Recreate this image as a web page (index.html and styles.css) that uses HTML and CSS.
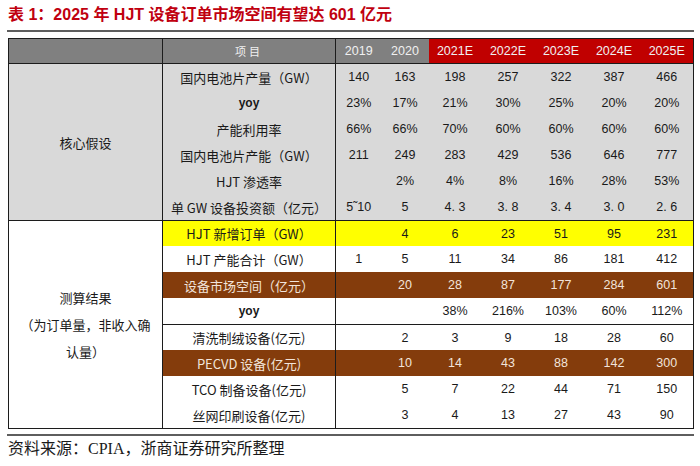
FILE: index.html
```html
<!DOCTYPE html>
<html lang="zh-CN">
<head>
<meta charset="utf-8">
<title>表 1</title>
<link rel="stylesheet" href="styles.css">
</head>
<body>
<div class="page">
  <h1 class="title">表 1：2025 年 HJT 设备订单市场空间有望达 601 亿元</h1>
  <div class="rule"></div>
  <table class="tbl">
    <colgroup>
      <col class="w-c1"><col class="w-c2"><col class="w-y19"><col class="w-y20">
      <col class="w-e"><col class="w-e"><col class="w-e"><col class="w-e"><col class="w-e">
    </colgroup>
    <thead>
      <tr class="head">
        <th class="hg c1"></th>
        <th class="hg c2 item">项目</th>
        <th class="hg">2019</th>
        <th class="hg">2020</th>
        <th class="hr">2021E</th>
        <th class="hr">2022E</th>
        <th class="hr">2023E</th>
        <th class="hr">2024E</th>
        <th class="hr">2025E</th>
      </tr>
    </thead>
    <tbody class="sec1">
      <tr>
        <td class="c1 grp" rowspan="6">核心假设</td>
        <td class="c2 lbl">国内电池片产量（GW）</td>
        <td>140</td><td>163</td><td>198</td><td>257</td><td>322</td><td>387</td><td>466</td>
      </tr>
      <tr>
        <td class="c2 lbl yoy">yoy</td>
        <td>23%</td><td>17%</td><td>21%</td><td>30%</td><td>25%</td><td>20%</td><td>20%</td>
      </tr>
      <tr>
        <td class="c2 lbl">产能利用率</td>
        <td>66%</td><td>66%</td><td>70%</td><td>60%</td><td>60%</td><td>60%</td><td>60%</td>
      </tr>
      <tr>
        <td class="c2 lbl">国内电池片产能（GW）</td>
        <td>211</td><td>249</td><td>283</td><td>429</td><td>536</td><td>646</td><td>777</td>
      </tr>
      <tr>
        <td class="c2 lbl">HJT 渗透率</td>
        <td></td><td>2%</td><td>4%</td><td>8%</td><td>16%</td><td>28%</td><td>53%</td>
      </tr>
      <tr>
        <td class="c2 lbl">单 GW 设备投资额（亿元）</td>
        <td>5˜10</td><td>5</td><td>4. 3</td><td>3. 8</td><td>3. 4</td><td>3. 0</td><td>2. 6</td>
      </tr>
    </tbody>
    <tbody class="sec2">
      <tr class="yellow first">
        <td class="c1 grp grp2" rowspan="8">测算结果<br>（为订单量，非收入确<br>认量）</td>
        <td class="c2 lbl">HJT 新增订单（GW）</td>
        <td></td><td>4</td><td>6</td><td>23</td><td>51</td><td>95</td><td>231</td>
      </tr>
      <tr>
        <td class="c2 lbl">HJT 产能合计（GW）</td>
        <td>1</td><td>5</td><td>11</td><td>34</td><td>86</td><td>181</td><td>412</td>
      </tr>
      <tr class="brown">
        <td class="c2 lbl">设备市场空间（亿元）</td>
        <td></td><td>20</td><td>28</td><td>87</td><td>177</td><td>284</td><td>601</td>
      </tr>
      <tr>
        <td class="c2 lbl yoy">yoy</td>
        <td></td><td></td><td>38%</td><td>216%</td><td>103%</td><td>60%</td><td>112%</td>
      </tr>
      <tr class="divided">
        <td class="c2 lbl">清洗制绒设备(亿元)</td>
        <td></td><td>2</td><td>3</td><td>9</td><td>18</td><td>28</td><td>60</td>
      </tr>
      <tr class="brown">
        <td class="c2 lbl">PECVD 设备(亿元)</td>
        <td></td><td>10</td><td>14</td><td>43</td><td>88</td><td>142</td><td>300</td>
      </tr>
      <tr>
        <td class="c2 lbl">TCO 制备设备(亿元)</td>
        <td></td><td>5</td><td>7</td><td>22</td><td>44</td><td>71</td><td>150</td>
      </tr>
      <tr>
        <td class="c2 lbl">丝网印刷设备(亿元)</td>
        <td></td><td>3</td><td>4</td><td>13</td><td>27</td><td>43</td><td>90</td>
      </tr>
    </tbody>
  </table>
  <div class="rule rule-bottom"></div>
  <p class="source">资料来源：CPIA，浙商证券研究所整理</p>
</div>
</body>
</html>
```
FILE: styles.css
```css
body {
  margin: 0;
  background: #ffffff;
}

.page {
  padding: 4px 6px 0 7px;
  width: 687px;
}

.title {
  margin: 0 0 0 1px;
  font: bold 16px/22px "Liberation Sans", "Noto Sans CJK SC", sans-serif;
  color: #c0000f;
}

.rule {
  height: 2px;
  background: #5e5e5e;
  margin-top: 4px;
}

.rule-bottom {
  margin-top: 5px;
}

.tbl {
  margin: 6px 0 0 1px;
  width: 685px;
  border-collapse: collapse;
  table-layout: fixed;
  border: 1px solid #1c1c1c;
}

.w-c1 { width: 154px; }
.w-c2 { width: 173px; }
.w-y19 { width: 46px; }
.w-y20 { width: 47px; }
.w-e { width: 53px; }

.tbl th,
.tbl td {
  height: 26px;
  padding: 0;
  text-align: center;
  vertical-align: middle;
  font: 12.5px "Liberation Sans", "Noto Sans CJK SC", sans-serif;
  color: #1a1a1a;
}

.tbl .head th {
  height: 24px;
  border-bottom: 1px solid #1c1c1c;
  color: #f0f0f0;
}

.hg { background: #808080; }
.hr { background: #c00000; }

.tbl .item {
  font-family: "Noto Sans CJK SC", sans-serif;
  font-size: 11px;
  letter-spacing: 3px;
  color: #dcdcdc;
}

.c1,
.c2 {
  border-right: 1px solid #1c1c1c;
}

.sec1 td {
  background: #d9d9d9;
}

.tbl .lbl {
  font-family: "Noto Sans CJK SC", sans-serif;
  font-size: 13px;
  white-space: nowrap;
}

.tbl .grp {
  font-family: "Noto Sans CJK SC", sans-serif;
  font-size: 13px;
}

.tbl .grp2 {
  line-height: 27px;
  background: #ffffff;
}

.tbl .yoy {
  font-family: "Liberation Sans", sans-serif;
  font-weight: bold;
  font-size: 12px;
}

.tbl .sec2 tr.first td {
  height: 25px;
  border-top: 1px solid #1c1c1c;
}

.yellow td:not(.grp) {
  background: #ffff00;
}

.tbl .brown td {
  background: #843c0c;
  color: #f2e4da;
}

.tbl .divided td {
  height: 25px;
  border-top: 1px solid #1c1c1c;
}

.source {
  margin: 1px 0 0 1px;
  font: 16px/24px "Liberation Serif", "Noto Sans CJK SC", serif;
  color: #1a1a1a;
}
```
